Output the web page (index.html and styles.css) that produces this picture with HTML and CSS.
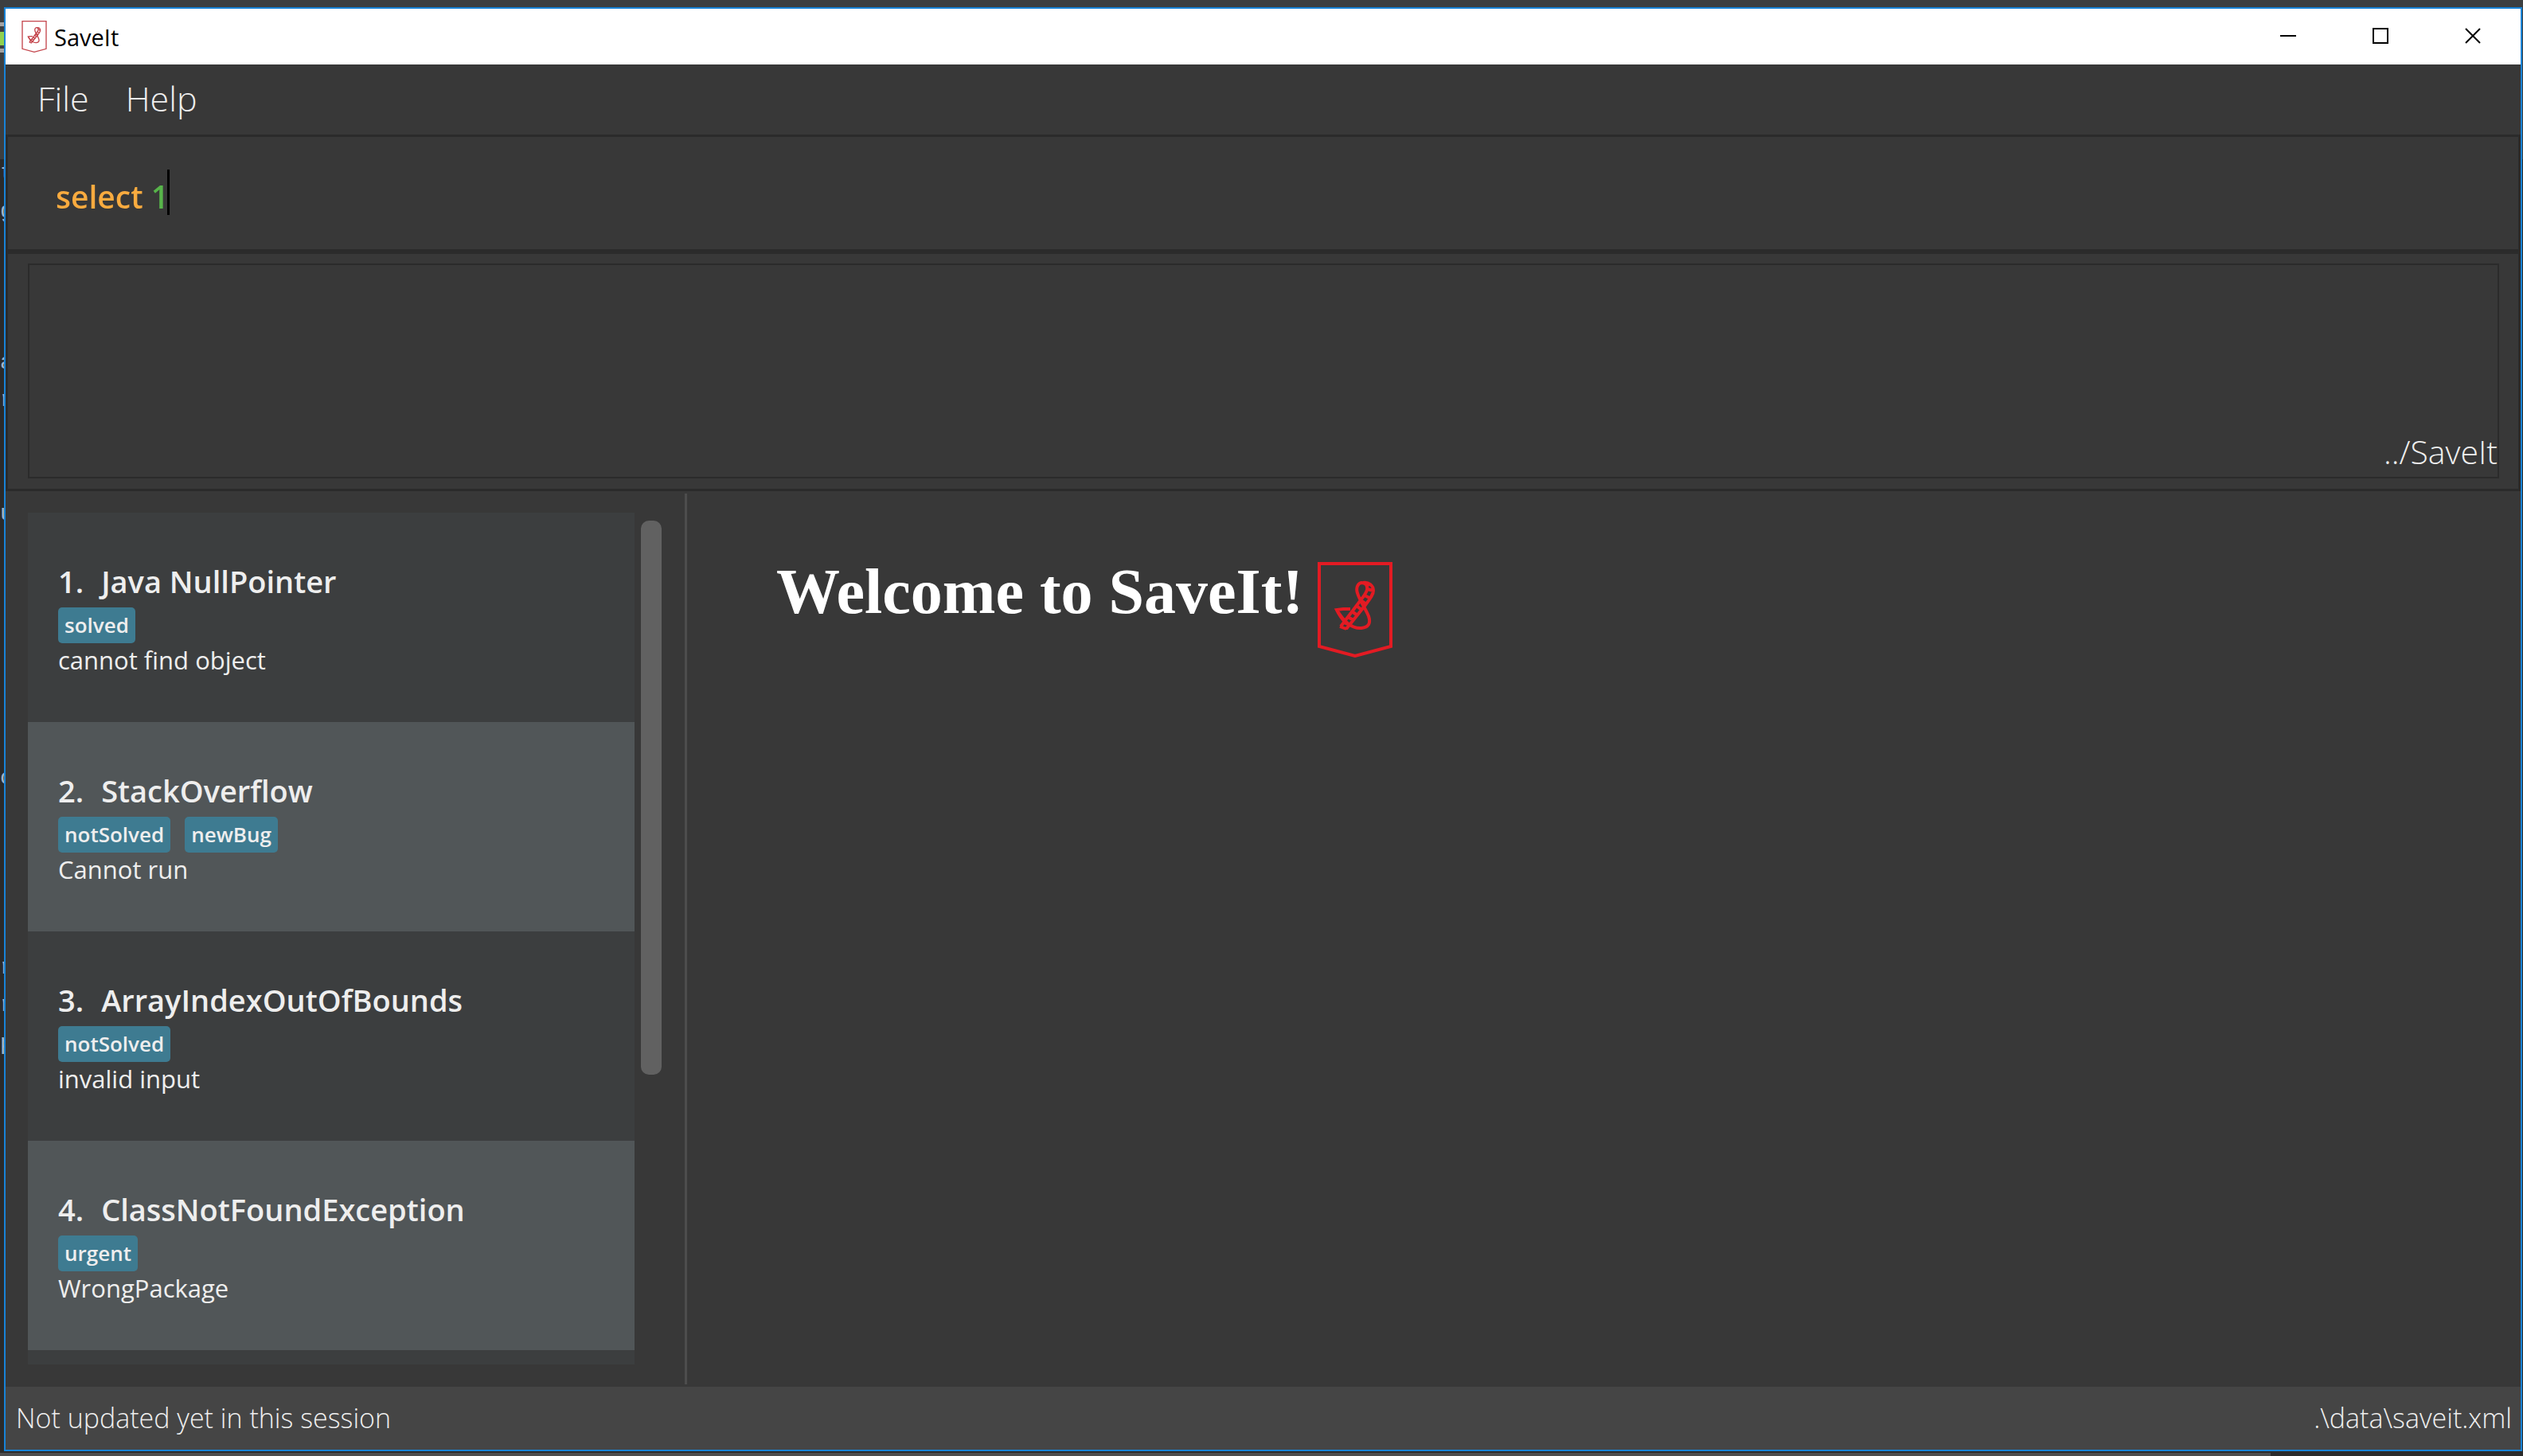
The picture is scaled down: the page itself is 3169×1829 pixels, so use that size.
FILE: index.html
```html
<!DOCTYPE html>
<html lang="en">
<head>
<meta charset="utf-8">
<title>SaveIt</title>
<link rel="stylesheet" href="styles.css">
</head>
<body class="desktop">
<svg class="symbols" aria-hidden="true">
  <symbol id="saveit-logo" viewBox="0 0 94 120">
    <path d="M2 2H92V106L47 118L2 106Z"/>
    <path d="M29 81L54 48C58 43 61 39 62 35C63 29 60 26 55 26C50 27 48 33 50 39C53 49 60 58 64 68C67 77 64 82 55 83C44 84 33 75 24 60L32 59L41 59"/>
    <path d="M36 84L60 54C66 46 70 41 70 36C70 29 64 25 57 26M24 60C27 67 31 72 36 77M28 81L36 84M33 76L40 79M38 69L45 73M43 62L50 67M49 55L55 60M54 48L61 53M59 42L67 46M62 34L70 36M60 29L66 28"/>
  </symbol>
</svg>
<div class="editor" aria-hidden="true">
  <div class="editor-mark"></div>
  <div class="editor-lines">
    <i>t</i><i>g</i><i></i><i></i><i></i><i>a</i><i>r</i><i></i><i></i><i>u</i><i></i><i></i><i></i><i></i><i></i><i></i><i>c</i><i></i><i></i><i></i><i></i><i>r</i><i>r</i><i>p</i>
  </div>
</div>
<div class="window">
  <header class="titlebar">
    <svg class="titlebar-icon" aria-hidden="true"><use href="#saveit-logo"/></svg>
    <h1 class="titlebar-text">SaveIt</h1>
    <div class="controls">
      <button class="control" type="button" aria-label="Minimize"><svg class="glyph" viewBox="0 0 20 20"><path d="M0 10H20"/></svg></button>
      <button class="control" type="button" aria-label="Maximize"><svg class="glyph" viewBox="0 0 20 20"><path d="M1 1H19V19H1Z"/></svg></button>
      <button class="control" type="button" aria-label="Close"><svg class="glyph" viewBox="0 0 20 20"><path d="M1 1L19 19M19 1L1 19"/></svg></button>
    </div>
  </header>
  <nav class="menubar">
    <button class="menu" type="button">File</button>
    <button class="menu" type="button">Help</button>
  </nav>
  <form class="pane command">
    <input class="command-input" type="text" value="select 1" aria-label="Command" spellcheck="false" autocomplete="off">
  </form>
  <section class="pane result">
    <output class="result-box">../SaveIt</output>
  </section>
  <main class="split">
    <section class="issues">
      <ol class="issue-list">
        <li class="issue">
          <h2 class="issue-title"><span>1.</span><span>Java NullPointer</span></h2>
          <div class="tags"><span class="tag">solved</span></div>
          <p class="issue-text">cannot find object</p>
        </li>
        <li class="issue">
          <h2 class="issue-title"><span>2.</span><span>StackOverflow</span></h2>
          <div class="tags"><span class="tag">notSolved</span><span class="tag">newBug</span></div>
          <p class="issue-text">Cannot run</p>
        </li>
        <li class="issue">
          <h2 class="issue-title"><span>3.</span><span>ArrayIndexOutOfBounds</span></h2>
          <div class="tags"><span class="tag">notSolved</span></div>
          <p class="issue-text">invalid input</p>
        </li>
        <li class="issue">
          <h2 class="issue-title"><span>4.</span><span>ClassNotFoundException</span></h2>
          <div class="tags"><span class="tag">urgent</span></div>
          <p class="issue-text">WrongPackage</p>
        </li>
        <li class="issue issue-next"></li>
      </ol>
      <div class="scrollbar"><div class="thumb"></div></div>
    </section>
    <article class="welcome">
      <h2 class="welcome-title">Welcome to SaveIt!</h2>
      <svg class="welcome-logo" aria-hidden="true"><use href="#saveit-logo"/></svg>
    </article>
  </main>
  <footer class="statusbar">
    <span>Not updated yet in this session</span>
    <span>.\data\saveit.xml</span>
  </footer>
</div>
</body>
</html>
```
FILE: styles.css
```css
* {
  box-sizing: border-box;
}

.desktop {
  display: flex;
  height: 100vh;
  margin: 0;
  padding: 9px 1px 6px 0;
  background:
    linear-gradient(#4d4d4d, #4d4d4d) 0 100% / 90% 4px no-repeat,
    linear-gradient(#3c3f41 200px, #2b2b2b 200px);
  color: #eeeeee;
  font-family: "Open Sans", "Noto Sans", sans-serif;
}

.symbols {
  position: absolute;
  width: 0;
  height: 0;
}

/* Sliver of the code editor behind the window */
.editor {
  flex: none;
  overflow: hidden;
  width: 5px;
  padding-top: 19px;
}

.editor-mark {
  height: 38px;
  border: solid #a3a3a3;
  border-width: 5px 0;
  background: linear-gradient(#3c3f41 7px, #8fd14f 7px, #8fd14f 24px, #3c3f41 24px);
}

.editor-lines {
  display: grid;
  grid-auto-rows: 1fr;
  height: 1140px;
  margin-top: 128px;
  color: #a9b7c6;
  font: 28px/47px "Liberation Mono", monospace;
}

.editor-lines i {
  font-style: normal;
}

.window {
  display: flex;
  flex: 1;
  flex-direction: column;
  min-width: 0;
  border: 2px solid #1883d7;
  background: #383838;
}

.titlebar {
  display: flex;
  flex: none;
  align-items: center;
  height: 70px;
  padding: 0 2px 0 20px;
  background: #ffffff;
  color: #000000;
}

.titlebar-icon {
  width: 32px;
  height: 40px;
  fill: none;
  stroke: #c4454c;
  stroke-width: 4px;
}

.titlebar-text {
  margin: 0 0 0 9px;
  font-size: 29px;
  font-weight: 400;
}

.controls {
  display: flex;
  align-self: stretch;
  margin-left: auto;
}

.control {
  width: 116px;
  padding: 0;
  border: 0;
  background: none;
}

.glyph {
  width: 20px;
  height: 20px;
  fill: none;
  stroke: #000000;
  stroke-width: 2px;
}

.menubar {
  display: flex;
  flex: none;
  gap: 46px;
  align-items: flex-start;
  height: 88px;
  padding: 0 40px;
}

.menu {
  padding: 0;
  border: 0;
  background: none;
  color: inherit;
  font: 300 43px/86px "Open Sans", "Noto Sans", sans-serif;
}

.pane {
  flex: none;
  margin: 0;
  border: 3px solid #2b2b2b;
}

.command {
  height: 147px;
  padding: 40px 60px;
}

/* First word in the command colour, argument in green, caret after it */
.command-input {
  width: 100%;
  height: 64px;
  padding: 4px 0 0;
  border: 0;
  outline: 0;
  background:
    linear-gradient(#000000, #000000) 140px 1px / 3px 57px no-repeat border-box,
    linear-gradient(90deg, #f9ab3f 118px, #57b44a 118px) text;
  color: transparent;
  font: 600 39px/60px "Open Sans", "Noto Sans", sans-serif;
}

.result {
  height: 301px;
  padding: 12px 24px 13px 25px;
}

.result-box {
  display: flex;
  align-items: flex-end;
  justify-content: flex-end;
  height: 270px;
  border: 2px solid #2b2b2b;
  font-size: 41px;
  font-weight: 300;
  line-height: 64px;
}

.split {
  display: flex;
  flex: 1;
  min-height: 0;
}

.issues {
  display: flex;
  flex: none;
  gap: 8px;
  width: 856px;
  margin: 3px 0;
  padding: 24px 29px 25px 28px;
  border-right: 3px solid #4d4d4d;
}

.issue-list {
  display: flex;
  flex: 1;
  flex-direction: column;
  overflow: hidden;
  margin: 0;
  padding: 0;
  list-style: none;
}

.issue {
  flex: none;
  height: 263px;
  padding: 58px 38px;
  background: #3c3e3f;
}

.issue:nth-child(even) {
  background: #515658;
}

.issue-next {
  flex: 1;
  height: auto;
  padding: 0;
}

.issue-title {
  display: flex;
  gap: 22px;
  margin: 0 0 4px;
  font-size: 38px;
  font-weight: 600;
  line-height: 57px;
}

.tags {
  display: flex;
  gap: 18px;
}

.tag {
  padding: 0 8px;
  border-radius: 5px;
  background: #3e7b91;
  font-size: 26px;
  font-weight: 600;
  line-height: 45px;
}

.issue-text {
  margin: 0;
  font-size: 31px;
  line-height: 42px;
}

.scrollbar {
  width: 26px;
  padding-top: 10px;
}

.thumb {
  height: calc(66% - 4px);
  border-radius: 10px;
  background: #616161;
}

.welcome {
  display: flex;
  gap: 18px;
  align-items: flex-start;
  padding: 89px 112px;
}

.welcome-title {
  margin: 0;
  color: #ffffff;
  font: 700 80px/74px "Liberation Serif", serif;
}

.welcome-logo {
  width: 94px;
  height: 120px;
  fill: none;
  stroke: #e31b23;
  stroke-width: 4px;
}

.statusbar {
  display: flex;
  flex: none;
  justify-content: space-between;
  padding: 0 11px 0 13px;
  background: #454545;
  font-size: 34px;
  font-weight: 300;
  line-height: 79px;
}
```
